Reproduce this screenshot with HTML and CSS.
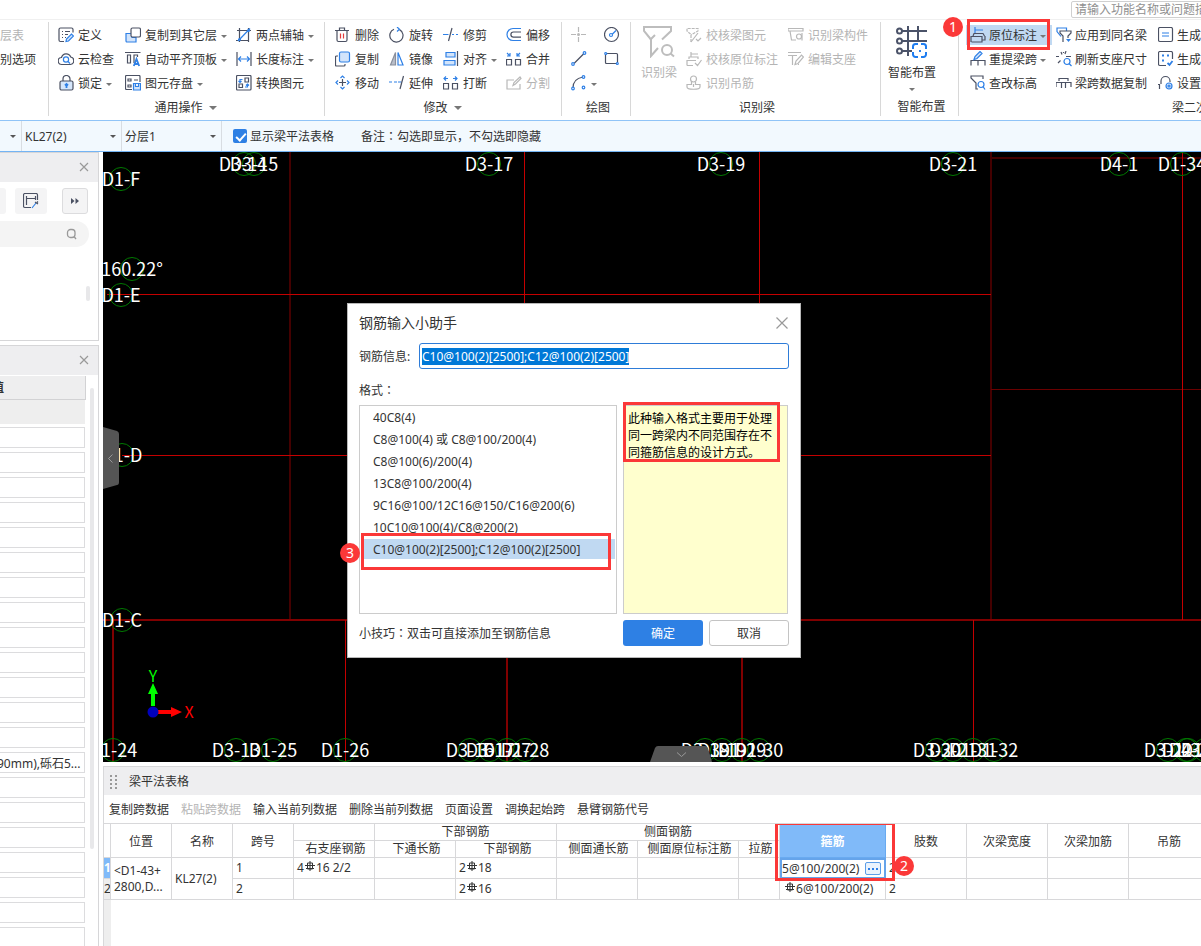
FILE: index.html
```html
<!DOCTYPE html>
<html lang="zh-CN">
<head>
<meta charset="utf-8">
<title>梁平法表格</title>
<link rel="stylesheet" href="styles.css">
</head>
<body>
<div class="app">
  <header class="topbar">
    <input class="top-search" type="text" aria-label="搜索功能" placeholder="请输入功能名称或问题描述">
  </header>

  <nav class="ribbon">
    <section class="group g-select">
      <div class="rows">
        <button class="cmd off">层表</button>
        <button class="cmd">别选项</button>
      </div>
    </section>

    <section class="group g-common">
      <div class="cols">
        <button class="cmd"><svg class="ic" viewBox="0 0 16 16"><path class="d" d="M6 14.500H2.500a1.500 1.500 0 0 1-1.500-1.500v-10.500a1.500 1.500 0 0 1 1.500-1.500h11a1.500 1.500 0 0 1 1.500 1.500v3"/><path class="d" d="M4 4.500h1M7 4.500h5M4 7.500h1M7 7.500h3M4 10.500h1M7 10.500h1"/><path class="bf" d="M8 14.500l.5-2.500 5-5 2 2-5 5z"/></svg>定义</button>
        <button class="cmd"><svg class="ic" viewBox="0 0 16 16"><path class="bf" d="M1 6.500h6v4h4v4.500H2a1 1 0 0 1-1-1z"/><rect class="dw" x="6" y="1" width="9.500" height="9" rx="1.500"/></svg>复制到其它层<i class="caret"></i></button>
        <button class="cmd"><svg class="ic" viewBox="0 0 16 16"><path class="d" d="M1 3.500h14M3.500 1v14M0 13.500h13M12.500 1v14"/><path class="b" d="M2 14L14 1.500"/><circle class="bdot" cx="3.500" cy="12.500" r="1.500"/><circle class="bdot" cx="12.500" cy="3.500" r="1.500"/></svg>两点辅轴<i class="caret"></i></button>

        <button class="cmd"><svg class="ic" viewBox="0 0 16 16"><path class="d" d="M4 13.500a3.500 3.500 0 0 1-.5-7 4.800 4.800 0 0 1 9.200-.5 3.800 3.800 0 0 1-.2 7.500z"/><circle class="b" cx="8" cy="8.500" r="2.600"/><path class="b" d="M10 10.500l2 2"/></svg>云检查</button>
        <button class="cmd"><svg class="ic" viewBox="0 0 16 16"><path class="d" d="M0 1.500h15.500M2.500 4h3v8h-3zM9 12V4h3.500v2"/><path class="bb" d="M8.800 15l2.700-7 2.700 7M9.800 13h3.500"/></svg>自动平齐顶板<i class="caret"></i></button>
        <button class="cmd"><svg class="ic" viewBox="0 0 16 16"><path class="d" d="M1 1v14M15 1v14"/><path class="b" d="M2 8h12M5 5.500L2.500 8 5 10.500M11 5.500L13.500 8 11 10.500"/></svg>长度标注<i class="caret"></i></button>

        <button class="cmd"><svg class="ic" viewBox="0 0 16 16"><path class="d" d="M5 6V4a3.500 3.500 0 0 1 7 0v2"/><rect class="lk" x="2" y="6" width="13" height="9" rx="1.500"/><path class="bb" d="M8.500 13V9M7 10.500L8.500 9l1.500 1.500"/></svg>锁定<i class="caret"></i></button>
        <button class="cmd"><svg class="ic" viewBox="0 0 16 16"><path class="d" d="M7 14.500H1.500a1 1 0 0 1-1-1v-12a1 1 0 0 1 1-1h12.500a1 1 0 0 1 1 1V7M3 4h3v2H3zM3 10h3v2H3zM9 5h4"/><path class="bf" d="M8.500 8.500h7v6.500h-7zM10.500 8.500v3h3v-3"/></svg>图元存盘<i class="caret"></i></button>
        <button class="cmd"><svg class="ic" viewBox="0 0 16 16"><rect class="d" x=".5" y=".5" width="14.500" height="14.500" rx="1"/><path class="d" d="M9 3h3.500v4H9zM3 9h3.500v3.500H3z"/><path class="b" d="M4 7.500V4.500h2.500M2.500 6L4 7.500 5.500 6M11.500 9v3H9M10 10.500l1.500-1.500L13 10.500"/></svg>转换图元</button>
      </div>
      <button class="glabel">通用操作<i class="caret big"></i></button>
    </section>

    <section class="group g-modify">
      <div class="cols">
        <button class="cmd"><svg class="ic" viewBox="0 0 16 16"><path class="d" d="M0 3.500h14M4.500 3V1h5v2M2 4v9a1.500 1.500 0 0 0 1.500 1.500h7A1.500 1.500 0 0 0 12 13V4"/><path class="r" d="M5.500 6.500v5M8.500 6.500v5"/></svg>删除</button>
        <button class="cmd"><svg class="ic" viewBox="0 0 16 16"><path class="d" d="M5 2.300a6.600 6.600 0 1 0 5.500.3"/><path class="b" d="M8 0l2.500 2.200L8 4.500"/></svg>旋转</button>
        <button class="cmd"><svg class="ic" viewBox="0 0 16 16"><path class="b" d="M0 7.500h5.500M9 7.500h2M13 7.500h2"/><path class="d" d="M9 1L5.500 14"/></svg>修剪</button>
        <button class="cmd"><svg class="ic" viewBox="0 0 16 16"><path class="b" d="M15 1.500H7a6 6 0 0 0 0 12h8"/><path class="d" d="M15 5H7.500a2.600 2.600 0 0 0 0 5.200H15"/></svg>偏移</button>

        <button class="cmd"><svg class="ic" viewBox="0 0 16 16"><path class="d" d="M3 5H1.500A1 1 0 0 0 .5 6v8a1 1 0 0 0 1 1H9a1 1 0 0 0 1-1v-1"/><rect class="bf" x="4.500" y="1" width="10" height="10" rx="1.500"/></svg>复制</button>
        <button class="cmd"><svg class="ic" viewBox="0 0 16 16"><path class="df" d="M6.500 1.500V14H1.500z"/><path class="b" d="M9 1.500V14h5z"/></svg>镜像</button>
        <button class="cmd"><svg class="ic" viewBox="0 0 16 16"><path class="bf" d="M3 1.500h9v4.500H3zM1 9.500h11V14H1z"/><path class="d" d="M14.500 0v15"/></svg>对齐<i class="caret"></i></button>
        <button class="cmd"><svg class="ic" viewBox="0 0 16 16"><path class="d" d="M.5 8.500h5v5.500h-5zM9.500 8.500h5v5.500h-5z"/><path class="b" d="M1 2l3 3M4 2v3H1M14 2l-3 3M11 2v3h3"/></svg>合并</button>

        <button class="cmd"><svg class="ic" viewBox="0 0 16 16"><path class="d" d="M4 7.500h7M7.500 4v7"/><path class="b" d="M5.500 3L7.500 1l2 2M5.500 12l2 2 2-2M3 5.500L1 7.500l2 2M12 5.500l2 2-2 2"/></svg>移动</button>
        <button class="cmd"><svg class="ic" viewBox="0 0 16 16"><path class="b" d="M0 7h3M5 7h3M9 7h3.500"/><path class="d" d="M14.500 1L11 14"/></svg>延伸</button>
        <button class="cmd"><svg class="ic" viewBox="0 0 16 16"><path class="d" d="M.5 8.500h5v5.500h-5zM9.500 8.500h5v5.500h-5z"/><path class="b" d="M1 3.500h4M3 1.500l-2 2 2 2M14 3.500h-4M12 1.500l2 2-2 2"/></svg>打断</button>
        <button class="cmd off"><svg class="ic" viewBox="0 0 16 16"><path class="g" d="M8 5H1v9h13V9M7 10.500l1-3L14 2l1 1.500L9.500 9z"/></svg>分割</button>
      </div>
      <button class="glabel">修改<i class="caret big"></i></button>
    </section>

    <section class="group g-draw">
      <div class="cols">
        <button class="cmd" aria-label="点"><svg class="ic" viewBox="0 0 16 16"><path class="g" d="M7.500 0v5M7.500 10v5M0 7.500h5M10 7.500h5"/><circle class="gdot" cx="7.500" cy="7.500" r="1.500"/></svg></button>
        <button class="cmd" aria-label="圆"><svg class="ic" viewBox="0 0 16 16"><circle class="d" cx="7.500" cy="7.500" r="7"/><path class="b" d="M8 7.500l4-4"/><circle class="bo" cx="7" cy="8" r="1.500"/></svg></button>
        <button class="cmd" aria-label="直线"><svg class="ic" viewBox="0 0 16 16"><path class="d" d="M3 12.500l10-10"/><circle class="bo" cx="2" cy="13" r="1.300"/><circle class="bo" cx="13.500" cy="2" r="1.300"/></svg></button>
        <button class="cmd" aria-label="矩形"><svg class="ic" viewBox="0 0 16 16"><rect class="d" x="1.500" y="2.500" width="12" height="10" rx="1"/><circle class="bo" cx="1.800" cy="2.500" r="1"/><circle class="bo" cx="13.300" cy="12.500" r="1"/></svg></button>
        <button class="cmd" aria-label="弧"><svg class="ic" viewBox="0 0 16 16"><path class="d" d="M2 13C2 7 6 3 12 2"/><circle class="bo" cx="2" cy="13.500" r="1.300"/><circle class="bo" cx="12.500" cy="2" r="1.300"/><circle class="bo" cx="12.500" cy="12.500" r="1.300"/></svg><i class="caret"></i></button>
      </div>
      <div class="glabel low">绘图</div>
    </section>

    <section class="group g-identify">
      <div class="split">
        <button class="bigcmd off"><svg class="bigic" viewBox="0 0 32 32"><path class="g2" d="M8 13.500L1 5V1h27v4l-9 8.500M7 14l5-5M8 13v17l7-8"/><circle class="g2" cx="24" cy="24" r="5"/><path class="g2" d="M27.500 27.500l3.500 3"/></svg>识别梁</button>
        <div class="cols">
          <button class="cmd off"><svg class="ic" viewBox="0 0 16 16"><path class="g" d="M5 15V7.500L1 4V1.500h11V4L5 8" stroke-dasharray="3 1"/><path class="g" d="M5 15l7-9M10 12l2 2 3-3"/></svg>校核梁图元</button>
          <button class="cmd off"><svg class="ic" viewBox="0 0 16 16"><path class="g" d="M0 1.500h15V4H0zM2 4l1.500 9H8"/><circle class="g" cx="11" cy="9.500" r="2.500"/><path class="g" d="M14 6v7.500"/></svg>识别梁构件</button>
          <button class="cmd off"><svg class="ic" viewBox="0 0 16 16"><path class="g" d="M5 6V1M5 3h7M3 8V6h9v2M1 14.500V9.500h9M1 14.500h6M9 12l2.500 2.500L15.500 9"/></svg>校核原位标注</button>
          <button class="cmd off"><svg class="ic" viewBox="0 0 16 16"><path class="g" d="M0 1.500h13M0 4.500h9M4.500 5v9M7 13.500l1-3.500 5.500-6 2 2-5.500 6.500zM10 13.500h1"/></svg>编辑支座</button>
          <button class="cmd off"><svg class="ic" viewBox="0 0 16 16"><circle class="g" cx="7.500" cy="4" r="3"/><path class="g" d="M5.500 6.500v3H1V12c0 3 13 3 13 0V9.500H9.500v-3M7.500 9v3"/></svg>识别吊筋</button>
        </div>
      </div>
      <div class="glabel low">识别梁</div>
    </section>

    <section class="group g-smart">
      <button class="bigcmd"><svg class="bigic" viewBox="0 0 32 32"><path class="d2" d="M6 5h25M6 15h25M6 25h10M12 0v30M22 0v16"/><circle class="dwo" cx="3.500" cy="5" r="2.500"/><circle class="dwo" cx="3.500" cy="15" r="2.500"/><circle class="dwo" cx="3.500" cy="25" r="2.500"/><path class="hole" d="M16 17h16v15H16z"/><path class="b2" d="M17 23v-2.500a2.500 2.500 0 0 1 2.500-2.500H22M25 18h2.500a2.500 2.500 0 0 1 2.500 2.500V23M30 26v2.500a2.500 2.500 0 0 1-2.500 2.500H25M22 31h-2.500a2.500 2.500 0 0 1-2.500-2.500V26"/><rect class="bdot" x="23" y="24" width="2" height="2"/></svg>智能布置<i class="caret"></i></button>
      <div class="glabel low">智能布置</div>
    </section>

    <section class="group g-second">
      <div class="cols">
        <button class="cmd picked"><svg class="ic" viewBox="0 0 16 16"><path class="b" d="M5 7V0M5 3h8"/><path class="d" d="M3 9l1-2.500h9L14.500 9M1 15V9.500h11V15H1.500M12 13h3V9"/></svg>原位标注<i class="caret"></i><span class="frame frame-cmd"><b class="badge badge-1">1</b></span></button>
        <button class="cmd"><svg class="ic" viewBox="0 0 16 16"><path class="b" d="M5 9.500L1 4.500V1h9.500v3"/><path class="d" d="M7 15V9L4 6V4h11v2l-3 3v2"/><path class="bdot" d="M10 12h5l-2.500 3z"/></svg>应用到同名梁</button>
        <button class="cmd"><svg class="ic" viewBox="0 0 16 16"><rect class="d" x=".5" y=".5" width="14" height="14" rx="1.500"/><path class="b" d="M4 6h7M4 9h7"/></svg>生成</button>

        <button class="cmd"><svg class="ic" viewBox="0 0 16 16"><path class="d" d="M1 14.500V9.500h14v5M8 10v4.500"/><path class="bf" d="M4 8.500l1-3 5-5 2 2-5 5z"/></svg>重提梁跨<i class="caret"></i></button>
        <button class="cmd"><svg class="ic" viewBox="0 0 16 16"><path class="d" d="M0 5.500h3M10 5.500h5M5 1l1 2.500M10 0L9 3M2 12l2.500-2.500M7.500 1v1"/><circle class="b" cx="11" cy="10.500" r="3"/><path class="b" d="M13 12.500l2.500 2.500"/></svg>刷新支座尺寸</button>
        <button class="cmd"><svg class="ic" viewBox="0 0 16 16"><path class="d" d="M8 14.500H2A1.500 1.500 0 0 1 .5 13V2A1.500 1.500 0 0 1 2 .5h11A1.500 1.500 0 0 1 14.500 2v6"/><path class="bb" d="M4 4.500h2M9 4.500h2M4 9.500h2M9.500 12l2 2 3-4"/></svg>生成</button>

        <button class="cmd"><svg class="ic" viewBox="0 0 16 16"><path class="d" d="M8 14H6V8L1 3V1h12v3"/><circle class="b" cx="11" cy="9.500" r="3"/><path class="b" d="M13 11.500l2 3"/></svg>查改标高</button>
        <button class="cmd"><svg class="ic" viewBox="0 0 16 16"><path class="d" d="M3 6V3.500h9V6M0 12V7.500h15V12M5.500 8v5M9.500 8v5"/></svg>梁跨数据复制</button>
        <button class="cmd"><svg class="ic" viewBox="0 0 16 16"><path class="d" d="M1.500 14V9.500H0M3 9V6a4.500 4.500 0 0 1 9 0v1"/><circle class="bf" cx="11" cy="11" r="3"/><circle class="b" cx="11" cy="11" r="1"/></svg>设置</button>
      </div>
      <div class="glabel">梁二次</div>
    </section>
  </nav>

  <div class="filters">
    <label class="combo c-first"><select aria-label="楼层"><option></option></select></label>
    <label class="combo"><select aria-label="构件"><option>KL27(2)</option></select></label>
    <label class="combo"><select aria-label="分层"><option>分层1</option></select></label>
    <label class="tick"><input type="checkbox" checked><span>显示梁平法表格</span></label>
    <span class="note">备注<span class="colon" lang="zh-TW">：</span>勾选即显示，不勾选即隐藏</span>
  </div>

  <main class="work">
    <aside class="side">
      <section class="panel">
        <div class="phead"><button class="close" aria-label="关闭"><svg viewBox="0 0 10 10"><path d="M1 1l8 8M9 1L1 9"/></svg></button></div>
        <div class="ptools">
          <button class="tool cut" aria-label="新建"></button>
          <button class="tool wide" aria-label="拾取"><svg class="ic" viewBox="0 0 16 16"><path class="d" d="M8 14.500H2A1.500 1.500 0 0 1 .5 13V2A1.500 1.500 0 0 1 2 .5h11A1.500 1.500 0 0 1 14.500 2v5M3.500 3v9M3.500 5.500h9M12.500 3v4"/><path class="bf" d="M9 15l4-5"/><path class="d" d="M12 9l3 2M14 8.500l1 1"/></svg></button>
          <button class="tool more" aria-label="更多"><svg class="dbl" viewBox="0 0 8 6"><path d="M0 0l3.500 3L0 6zM4.500 0L8 3 4.500 6z"/></svg></button>
        </div>
        <div class="psearch"><svg viewBox="0 0 12 12"><rect x="1.500" y="1.500" width="7.500" height="8" rx="3"/><path d="M8 8.500l2 2.500"/></svg></div>
        <div class="thumb"></div>
      </section>
      <section class="panel props">
        <div class="phead"><button class="close" aria-label="关闭"><svg viewBox="0 0 10 10"><path d="M1 1l8 8M9 1L1 9"/></svg></button></div>
        <div class="pbody">
          <div class="plist">
            <div class="pcol"><span>值</span></div>
            <div class="prow"></div>
            <div class="fields">
              <input aria-label="属性1"><input aria-label="属性2"><input aria-label="属性3"><input aria-label="属性4"><input aria-label="属性5"><input aria-label="属性6"><input aria-label="属性7"><input aria-label="属性8"><input aria-label="属性9"><input aria-label="属性10"><input aria-label="属性11"><input aria-label="属性12"><input aria-label="属性13"><input aria-label="材料" value="90mm),砾石5..."><input aria-label="属性15"><input aria-label="属性16"><input aria-label="属性17"><input aria-label="属性18"><input aria-label="属性19"><input aria-label="属性20"><input aria-label="属性21">
            </div>
          </div>
          <div class="pscroll"></div>
        </div>
      </section>
    </aside>

    <div class="stage">
      <div class="canvas">
        <svg class="plan" viewBox="103 152 1098 610" preserveAspectRatio="xMinYMin slice">
          <g class="axis-dim"><path d="M290 152V619M991 152V619M991 158H1201"/></g>
          <g class="axis-mid"><path d="M103 620H1201M113 620V762M507 620V762M742 620V762"/></g>
          <g class="axis-low"><path d="M991 389.500H1201"/></g>
          <g class="axis"><path d="M107 294.500H991M122 455.500H991M524.500 152V620M759.500 152V620M1182.500 152V620M345.500 620V762M973.500 620V762"/></g>
          <g class="bub">
            <circle cx="121" cy="179" r="11.500"/><circle cx="132" cy="269" r="11.500"/><circle cx="121" cy="295" r="11.500"/><circle cx="122" cy="455" r="11.500"/><circle cx="122" cy="620" r="11.500"/>
            <circle cx="244" cy="164" r="11.500"/><circle cx="254" cy="164" r="11.500"/><circle cx="489" cy="164" r="11.500"/><circle cx="721" cy="164" r="11.500"/><circle cx="953" cy="164" r="11.500"/><circle cx="1119" cy="164" r="11.500"/><circle cx="1182" cy="164" r="11.500"/>
            <circle cx="113" cy="750" r="11.500"/><circle cx="236" cy="750" r="11.500"/><circle cx="273" cy="750" r="11.500"/><circle cx="345" cy="750" r="11.500"/><circle cx="470" cy="750" r="11.500"/><circle cx="490" cy="750" r="11.500"/><circle cx="507" cy="750" r="11.500"/><circle cx="525" cy="750" r="11.500"/><circle cx="705" cy="750" r="11.500"/><circle cx="722" cy="750" r="11.500"/><circle cx="742" cy="750" r="11.500"/><circle cx="759" cy="750" r="11.500"/><circle cx="937" cy="750" r="11.500"/><circle cx="953" cy="750" r="11.500"/><circle cx="973" cy="750" r="11.500"/><circle cx="994" cy="750" r="11.500"/><circle cx="1168" cy="750" r="11.500"/><circle cx="1186" cy="750" r="11.500"/><circle cx="1188" cy="750" r="11.500"/><circle cx="1205" cy="750" r="11.500"/>
          </g>
          <g class="names">
            <text x="121" y="186">D1-F</text><text x="132" y="276">160.22°</text><text x="121" y="302">D1-E</text><text x="122" y="462">D1-D</text><text x="122" y="627">D1-C</text>
            <text x="243" y="171">D3-14</text><text x="254" y="171">D3-15</text><text x="489" y="171">D3-17</text><text x="721" y="171">D3-19</text><text x="953" y="171">D3-21</text><text x="1119" y="171">D4-1</text><text x="1182" y="171">D1-34</text>
            <text x="113" y="757">D1-24</text><text x="236" y="757">D3-13</text><text x="273" y="757">D1-25</text><text x="345" y="757">D1-26</text>
            <text x="470" y="757">D3-16</text><text x="490" y="757">D3-17</text><text x="507" y="757">D1-27</text><text x="525" y="757">D1-28</text>
            <text x="705" y="757">D3-18</text><text x="722" y="757">D3-19</text><text x="742" y="757">D1-29</text><text x="759" y="757">D1-30</text>
            <text x="937" y="757">D3-20</text><text x="953" y="757">D3-21</text><text x="973" y="757">D1-31</text><text x="994" y="757">D1-32</text>
            <text x="1168" y="757">D3-22</text><text x="1186" y="757">D1-33</text><text x="1188" y="757">D4-2</text><text x="1205" y="757">D1-34</text>
          </g>
          <path fill="#0f0" d="M151 706V694H148L153 683 158 694H155V706z"/>
          <path fill="#f00" d="M158 710H171V707L182 712 171 717V714H158z"/>
          <circle cx="153" cy="712" r="5.500" fill="#0000bc"/>
          <text class="ax ay" x="153" y="682">Y</text><text class="ax axx" x="189" y="718">X</text>
          <path fill="#555" d="M103 427L117 431Q119 432 119 434V482Q119 485 117 485L103 489z"/>
          <path class="chev" d="M112.500 454.500l-4 4 4 4"/>
          <path fill="#555" d="M650 762L655 748Q656 746 658 746H705Q707 746 708 748L712 762z"/>
          <path class="chev" d="M677 752.500l4.500 4 4.500-4"/>
        </svg>
      </div>

      <section class="sheet">
        <div class="shead"><svg class="grip" viewBox="0 0 7 14"><path d="M0 0h2v2H0zM5 0h2v2H5zM0 4h2v2H0zM5 4h2v2H5zM0 8h2v2H0zM5 8h2v2H5zM0 12h2v2H0zM5 12h2v2H5z"/></svg>梁平法表格</div>
        <div class="stools">
          <button>复制跨数据</button><button class="off">粘贴跨数据</button><button>输入当前列数据</button><button>删除当前列数据</button><button>页面设置</button><button>调换起始跨</button><button>悬臂钢筋代号</button>
        </div>
        <div class="swrap">
          <table class="grid">
            <colgroup><col class="w7"><col class="w61"><col class="w61"><col class="w61"><col class="w81"><col class="w81"><col class="w101"><col class="w81"><col class="w101"><col class="w41"><col class="w106"><col class="w81"><col class="w81"><col class="w81"><col class="w81"></colgroup>
            <thead>
              <tr><th rowspan="2"></th><th rowspan="2">位置</th><th rowspan="2">名称</th><th rowspan="2">跨号</th><th></th><th colspan="2">下部钢筋</th><th colspan="3">侧面钢筋</th><th rowspan="2" class="hot">箍筋<span class="frame frame-cell"><b class="badge badge-2">2</b></span></th><th rowspan="2">肢数</th><th rowspan="2">次梁宽度</th><th rowspan="2">次梁加筋</th><th rowspan="2">吊筋</th></tr>
              <tr class="sub"><th>右支座钢筋</th><th>下通长筋</th><th>下部钢筋</th><th>侧面通长筋</th><th>侧面原位标注筋</th><th>拉筋</th></tr>
            </thead>
            <tbody>
              <tr><th class="num on">1</th><td rowspan="2" class="pos">&lt;D1-43+<br>2800,D...</td><td rowspan="2">KL27(2)</td><td>1</td><td>4<svg class="bar" viewBox="0 0 10 10"><path d="M5 0v10M0 4.500h10M2.500 2h5v6h-5zM1 7.500h8"/></svg>16 2/2</td><td></td><td>2<svg class="bar" viewBox="0 0 10 10"><path d="M5 0v10M0 4.500h10M2.500 2h5v6h-5zM1 7.500h8"/></svg>18</td><td></td><td></td><td></td><td class="edit"><div class="editor"><input aria-label="箍筋" value="5@100/200(2)"><button aria-label="更多选项"><svg viewBox="0 0 10 2"><path d="M0 0h2v2H0zM4 0h2v2H4zM8 0h2v2H8z"/></svg></button></div></td><td>2</td><td></td><td></td><td></td></tr>
              <tr><th class="num">2</th><td>2</td><td></td><td></td><td>2<svg class="bar" viewBox="0 0 10 10"><path d="M5 0v10M0 4.500h10M2.500 2h5v6h-5zM1 7.500h8"/></svg>16</td><td></td><td></td><td></td><td class="inset"><svg class="bar" viewBox="0 0 10 10"><path d="M5 0v10M0 4.500h10M2.500 2h5v6h-5zM1 7.500h8"/></svg>6@100/200(2)</td><td>2</td><td></td><td></td><td></td></tr>
            </tbody>
          </table>
        </div>
      </section>
    </div>
  </main>
</div>

<div class="dialog" role="dialog" aria-labelledby="dlg-title">
  <div class="dhead"><h1 id="dlg-title">钢筋输入小助手</h1><button class="dclose" aria-label="关闭"><svg viewBox="0 0 12 12"><path d="M.5.500l11 11M11.500.500l-11 11"/></svg></button></div>
  <div class="dinfo"><label for="bar-info">钢筋信息:</label><input id="bar-info" type="text" value="C10@100(2)[2500];C12@100(2)[2500]"></div>
  <div class="dfmt">格式<span class="colon" lang="zh-TW">：</span></div>
  <div class="dbody">
    <ul class="formats">
      <li>40C8(4)</li>
      <li>C8@100(4) 或 C8@100/200(4)</li>
      <li>C8@100(6)/200(4)</li>
      <li>13C8@100/200(4)</li>
      <li>9C16@100/12C16@150/C16@200(6)</li>
      <li>10C10@100(4)/C8@200(2)</li>
      <li class="sel">C10@100(2)[2500];C12@100(2)[2500]<span class="frame frame-item"><b class="badge badge-3">3</b></span></li>
    </ul>
    <div class="help">此种输入格式主要用于处理同一跨梁内不同范围存在不同箍筋信息的设计方式。<span class="frame frame-help"></span></div>
  </div>
  <div class="dfoot"><span class="tip">小技巧<span class="colon" lang="zh-TW">：</span>双击可直接添加至钢筋信息</span><button class="ok">确定</button><button class="cancel">取消</button></div>
</div>
<script src="app.js"></script>
</body>
</html>
```
FILE: styles.css
```css
* { box-sizing: border-box; }
body {
  margin: 0;
  overflow: hidden;
  background: #fff;
  color: #333;
  font: 12px/16px "Noto Sans", "Noto Sans CJK SC", sans-serif;
}
button, input, select { font: inherit; color: inherit; margin: 0; padding: 0; border: 0; background: none; }
button { white-space: nowrap; cursor: pointer; }
.colon { font-family: "Noto Sans CJK TC", sans-serif; line-height: 1; }
.app { display: flex; flex-direction: column; height: 100vh; }

/* top search */
.topbar { flex: none; height: 20px; display: flex; justify-content: flex-end; overflow: hidden; border-bottom: 1px solid #f0f0f0; }
.top-search { flex: none; width: 160px; height: 17px; margin: 1px -30px 0 0; padding: 0 3px; border: 1px solid #d0d0d0; border-radius: 2px; }
.top-search::placeholder { color: #909090; opacity: 1; }

/* ribbon */
.ribbon { flex: none; display: flex; height: 100px; }
.group { position: relative; flex: none; display: flex; flex-direction: column; padding-top: 3px; }
.group:not(.g-second)::after { content: ""; position: absolute; right: 0; top: 2px; bottom: 4px; width: 1px; background: #d8d8d8; }
.g-select { width: 49px; }
.g-common { width: 276px; padding-left: 9px; }
.g-modify { width: 237px; padding-left: 10px; }
.g-draw { width: 69px; padding-left: 9px; }
.g-identify { width: 250px; padding-left: 10px; }
.g-smart { width: 78px; padding-left: 7px; }
.g-second { flex: 1 1 0; min-width: 0; padding-left: 11px; }
.rows { display: grid; grid-auto-rows: 24px; }
.cols { display: grid; grid-auto-rows: 24px; justify-items: start; }
.g-common .cols { grid-template-columns: 67px 111px 86px; }
.g-modify .cols { grid-template-columns: 54px 54px 63px 54px; }
.g-draw .cols { grid-template-columns: 33px 24px; }
.g-identify .cols { grid-template-columns: 102px 84px; }
.g-second .cols { grid-template-columns: 86px 102px 60px; }
.cmd { position: relative; display: flex; align-items: center; gap: 4px; height: 24px; padding-top: 2px; }
.g-second .cmd { gap: 3px; }
.off { color: #b4b4b4; }
.ic { flex: none; width: 16px; height: 16px; }
.cmd .ic { margin-top: -2px; }
.caret { flex: none; border: 3px solid transparent; border-top-color: #777; border-bottom: 0; }
.caret.big { border-width: 4px 4px 0; }
.glabel { display: flex; align-items: center; justify-content: center; gap: 6px; height: 24px; padding-top: 1px; }
.glabel.low { height: 28px; }
.g-common .glabel { margin-right: 12px; }
.g-modify .glabel { margin-right: 12px; }
.g-identify .glabel { margin-right: 8px; }
.g-draw .glabel { margin-right: 6px; }
.g-second .glabel { align-self: flex-end; margin-right: -7px; }
.split { display: flex; gap: 9px; }
.bigcmd { display: flex; flex-direction: column; align-items: center; height: 72px; padding-top: 3px; gap: 7px; }
.g-smart .bigcmd { align-self: flex-start; }
.bigic { width: 32px; height: 32px; }
.g-smart .glabel { margin-right: 4px; }
.picked::before { content: ""; position: absolute; z-index: -1; inset: 2px -6px 2px -4px; background: #c0d9f2; }
.ic path, .ic rect, .ic circle, .bigic path, .bigic rect, .bigic circle { fill: none; stroke-width: 1.2; }
.ic .d { stroke: #4b5163; }
.ic .dw { stroke: #4b5163; fill: #fff; }
.ic .df { stroke: #8a8f9c; fill: #b9bec9; }
.ic .lk { stroke: #4b5163; fill: #d5e6fb; }
.ic .b, .ic .bo { stroke: #2f80e6; }
.ic .bo { fill: #fff; }
.ic .bb { stroke: #2f80e6; stroke-width: 1.8; }
.ic .bf { stroke: #2f80e6; fill: #d2e4fb; }
.ic .bdot, .bigic .bdot { fill: #2f80e6; }
.ic .r { stroke: #e23c3c; }
.ic .g { stroke: #b8b8b8; }
.ic .gdot { fill: #b8b8b8; }
.bigic .g2 { stroke: #bdbdbd; stroke-width: 2; }
.bigic .d2, .bigic .dwo { stroke: #4b5369; stroke-width: 2; }
.bigic .dwo { fill: #fff; }
.bigic .hole { fill: #fff; }
.bigic .b2 { stroke: #1f7df0; stroke-width: 2; }

/* call-outs */
.frame { position: absolute; z-index: 3; border: 3px solid #fb3838; pointer-events: none; }
.badge { position: absolute; width: 20px; height: 20px; border-radius: 50%; background: #fb3838; color: #fff; font: 14px/20px "Noto Sans", sans-serif; text-align: center; }
.frame-cmd { left: -3px; top: -4px; width: 83px; height: 31px; }
.badge-1 { left: -27px; top: -5px; }
.frame-cell { left: -5px; top: -2px; width: 120px; height: 59px; }
.badge-2 { left: 116px; top: 31px; }
.frame-item { left: 1px; top: -6px; width: 250px; height: 37px; }
.badge-3 { left: -24px; top: 7px; }
.frame-help { left: -1px; top: -4px; width: 157px; height: 60px; }

/* filter bar */
.filters { flex: none; display: flex; align-items: center; height: 32px; background: #f2f9fe; border-top: 1px solid #90c4f7; border-bottom: 1px solid #74b4f4; }
.combo { position: relative; width: 100px; height: 30px; border-right: 1px solid #d8dde2; }
.combo.c-first { width: 22px; }
.combo select { width: 100%; height: 100%; padding: 2px 0 0 3px; appearance: none; outline: 0; }
.combo::after { content: ""; position: absolute; right: 5px; top: 14px; border: 3px solid transparent; border-top-color: #555; border-bottom: 0; }
.tick { display: flex; align-items: center; gap: 3px; margin-left: 11px; }
.tick span, .note { padding-top: 2px; }
.tick input { appearance: none; position: relative; width: 14px; height: 14px; border-radius: 2px; background: #2e80e4; }
.tick input:checked::after { content: ""; position: absolute; left: 5px; top: 2px; width: 4px; height: 8px; border: solid #fff; border-width: 0 2px 2px 0; rotate: 42deg; }
.note { margin-left: 27px; }

/* side panels */
.work { flex: 1; min-height: 0; display: grid; grid-template-columns: 99px minmax(0, 1fr); column-gap: 4px; }
.side { display: flex; flex-direction: column; gap: 4px; min-height: 0; overflow: hidden; }
.panel { border: solid #d6d6d8; border-width: 1px 1px 1px 0; }
.phead { display: flex; align-items: center; justify-content: flex-end; height: 29px; padding: 0 9px 1px 0; background: #eeeef0; }
.close { width: 10px; height: 10px; display: flex; }
.close svg, .dclose svg { width: 100%; fill: none; stroke: #999; stroke-width: 1.200; }
.ptools { display: flex; padding: 6px 0 7px; }
.tool { display: flex; align-items: center; justify-content: center; height: 26px; border-radius: 3px; background: #f4f4f5; }
.tool.cut { width: 6px; border-radius: 0 3px 3px 0; }
.tool.wide { width: 32px; margin-left: 9px; }
.tool.more { width: 26px; margin-left: 15px; border: 1px solid #dcdcde; }
.dbl { width: 8px; fill: #4b5163; }
.psearch { display: flex; align-items: center; justify-content: flex-end; height: 26px; width: 89px; padding-right: 11px; border-radius: 0 13px 13px 0; background: #f4f4f4; }
.psearch svg { width: 12px; fill: none; stroke: #999; stroke-width: 1.300; }
.thumb { width: 4px; height: 15px; margin: 39px 0 39px 86px; border-radius: 2px; background: #e8e8ea; }
.props { flex: 1; min-height: 0; overflow: hidden; border-bottom: 0; }
.pbody { display: flex; gap: 4px; padding-top: 1px; }
.plist { width: 86px; }
.pcol { height: 24px; overflow: hidden; background: #eeeeef; border: solid #d2d2d4; border-width: 0 1px 1px 0; line-height: 24px; font-weight: bold; }
.pcol span { display: block; margin-left: -8px; }
.prow { height: 24px; margin-right: 1px; background: #eee; }
.fields { display: flex; flex-direction: column; gap: 4px; padding-top: 3px; }
.fields input { width: 85px; height: 21px; border: solid #dcdcde; border-width: 1px 1px 1px 0; background: #fff; text-indent: -3px; }
.pscroll { width: 4px; height: 461px; margin-top: 12px; border-radius: 2px; background: #e8e8ea; }

/* drawing */
.stage { display: flex; flex-direction: column; min-height: 0; }
.canvas { flex: 1; min-height: 0; overflow: hidden; background: #000; }
.plan { display: block; width: 100%; height: 100%; }
.plan g path { fill: none; }
.axis path { stroke: #c40000; }
.axis-low path { stroke: #6a0000; }
.axis-dim path { stroke: #440000; stroke-width: 2; }
.axis-mid path { stroke: #800000; stroke-width: 2; }
.bub circle { fill: none; stroke: #007a00; }
.names text { fill: #fff; font: 18px "Noto Sans CJK SC", sans-serif; text-anchor: middle; }
.ax { font: 16px "Noto Sans CJK SC", sans-serif; text-anchor: middle; }
.ay { fill: #0f0; }
.axx { fill: #f00; }
.chev { fill: none; stroke: #999; }

/* beam sheet */
.sheet { flex: none; min-height: 180px; margin-top: 4px; border: solid #d8d8da; border-width: 1px 0 0 1px; display: flex; flex-direction: column; }
.shead { display: flex; align-items: center; gap: 12px; height: 28px; padding: 2px 0 0 6px; background: #eeeef0; }
.grip { width: 7px; height: 14px; fill: #999; }
.stools { display: flex; align-items: center; gap: 12px; height: 28px; padding: 2px 0 0 5px; }
.swrap { flex: 1; overflow: hidden; background: linear-gradient(to right, #eee 7px, #fff 7px); border-top: 1px solid #d8d8da; }
.grid { width: 1106px; table-layout: fixed; border-collapse: separate; border-spacing: 0; background: #fff; }
.w7 { width: 7px; } .w41 { width: 41px; } .w61 { width: 61px; } .w81 { width: 81px; } .w101 { width: 101px; } .w106 { width: 106px; }
.grid th, .grid td { height: 21px; padding: 0; border: solid #d8d8da; border-width: 0 1px 1px 0; font-weight: normal; line-height: 16px; white-space: nowrap; }
.grid thead th { height: 17px; text-align: center; }
.grid thead th[rowspan] { padding-top: 2px; }
.grid .sub th { padding-left: 3px; }
.grid td { padding-left: 3px; text-align: left; }
.grid .inset { padding-left: 4px; }
.grid .num { overflow: hidden; background: #eee; text-align: left; }
.grid .num.on { background: #80baf9; color: #fff; font-weight: bold; }
.grid .hot { position: relative; background: #80baf9; color: #fff; font-weight: bold; border-color: #69aaf0; }
.grid .edit { padding: 0; border: 0; }
.editor { display: flex; align-items: center; height: 21px; border: 2px solid #66a4ea; }
.editor input { width: 83px; min-width: 0; outline: 0; }
.editor button { display: flex; align-items: center; justify-content: center; width: 16px; height: 13px; border: 1px solid #5c9ee8; border-radius: 2px; background: #eaf3fd; }
.editor svg { width: 10px; fill: #2f80e6; }
.bar { width: 10px; height: 10px; margin: 0 1px; vertical-align: 1px; fill: none; stroke: #333; }

/* dialog */
.dialog { position: absolute; z-index: 5; left: 347px; top: 303px; width: 454px; padding: 0 11px 11px; background: #fff; border: 1px solid #b8b8b8; }
.dhead { display: flex; align-items: center; justify-content: space-between; height: 39px; padding: 0 1px 2px 0; }
.dhead h1 { margin: 0; font-size: 14px; font-weight: normal; }
.dclose { display: flex; width: 12px; height: 12px; }
.dinfo { display: flex; align-items: center; height: 26px; }
.dinfo label { width: 60px; padding-top: 2px; }
.dinfo input { flex: 1; height: 26px; padding: 0 2px; border: 1px solid #2e7cd8; border-radius: 3px; outline: 0; }
.dinfo input::selection { background: #0078d7; color: #fff; }
.dfmt { height: 36px; padding-top: 14px; }
.dbody { display: grid; grid-template-columns: minmax(0, 258px) minmax(0, 165px); gap: 6px; }
.formats { display: flex; flex-direction: column; gap: 2px; min-height: 209px; margin: 0; padding: 1px 0 0; border: 1px solid #ccc; list-style: none; }
.formats li { position: relative; height: 20px; margin-right: 1px; padding-left: 13px; line-height: 22px; }
.formats .sel { background: linear-gradient(to right, #fff 4px, #c0d9f2 4px); }
.help { position: relative; padding: 4px 12px 0 4px; border: 1px solid #ccc; background: #ffffce; color: #000; line-height: 17px; }
.dfoot { display: flex; align-items: center; gap: 6px; margin-top: 6px; }
.tip { flex: 1; padding-top: 2px; }
.dfoot button { width: 80px; height: 26px; padding-top: 2px; border-radius: 3px; }
.ok { background: #2e80e4; color: #fff; }
.cancel { border: 1px solid #c4c4c4; }
```
FILE: app.js
```javascript
const info = document.getElementById('bar-info');
info.focus();
info.select();
```
